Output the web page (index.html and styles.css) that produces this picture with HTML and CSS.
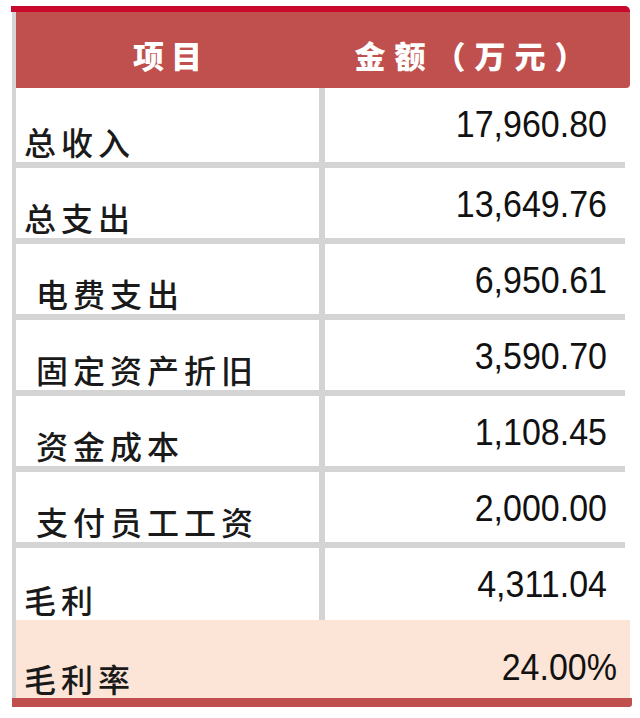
FILE: index.html
```html
<!DOCTYPE html>
<html lang="zh-CN">
<head>
<meta charset="utf-8">
<title>项目 金额</title>
<link rel="stylesheet" href="styles.css">
</head>
<body>
<div class="sheet">
  <div class="topline"></div>
  <div class="head">
    <div class="hcell">项目</div>
    <div class="hcell">金额（万元）</div>
  </div>
  <div class="grid">
    <div class="label">总收入</div><div class="amt"><span class="num">17,960.80</span></div>
    <div class="label">总支出</div><div class="amt"><span class="num">13,649.76</span></div>
    <div class="label sub">电费支出</div><div class="amt"><span class="num">6,950.61</span></div>
    <div class="label sub">固定资产折旧</div><div class="amt"><span class="num">3,590.70</span></div>
    <div class="label sub">资金成本</div><div class="amt"><span class="num">1,108.45</span></div>
    <div class="label sub">支付员工工资</div><div class="amt"><span class="num">2,000.00</span></div>
    <div class="label">毛利</div><div class="amt"><span class="num">4,311.04</span></div>
  </div>
  <div class="total">
    <div class="label">毛利率</div><div class="amt"><span class="num">24.00%</span></div>
  </div>
  <div class="bottomline"></div>
</div>
</body>
</html>
```
FILE: styles.css
```css
html, body {
  margin: 0;
  padding: 0;
  background: #ffffff;
}
.sheet {
  margin: 6px 0 0 12px;
  width: 620px;
}
.topline {
  margin-left: -1px;
  width: 619px;
  height: 6px;
  background: #c90a2c;
  border-top-right-radius: 5px;
}
.head {
  display: grid;
  grid-template-columns: 303px 305px;
  column-gap: 6px;
  width: 614px;
  height: 76px;
  border-left: 4px solid #d4d4d4;
  background: #c0504d;
  border-bottom-right-radius: 4px;
}
.hcell {
  display: flex;
  align-items: center;
  justify-content: center;
  padding-top: 8px;
  font-family: "Noto Sans CJK SC", sans-serif;
  font-weight: 900;
  font-size: 31px;
  line-height: 31px;
  color: #ffffff;
  letter-spacing: 7px;
  text-indent: 7px;
}
.hcell + .hcell {
  letter-spacing: 9px;
  text-indent: -6px;
}
.grid {
  display: grid;
  grid-template-columns: 303px 301px;
  grid-template-rows: 74px repeat(5, 70px) 72px;
  column-gap: 6px;
  row-gap: 6px;
  width: 604px;
  background: #d4d4d4;
  border-left: 4px solid #d4d4d4;
  border-right: 5px solid #d4d4d4;
}
.label {
  background: #ffffff;
  display: flex;
  align-items: flex-end;
  padding: 0 0 5px 8px;
  font-family: "Noto Sans CJK SC", serif;
  font-weight: 500;
  font-size: 32px;
  line-height: 32px;
  letter-spacing: 5px;
  color: #1a1a1a;
  white-space: nowrap;
}
.label.sub {
  padding-left: 20px;
}
.amt {
  background: #ffffff;
  display: flex;
  align-items: flex-start;
  justify-content: flex-end;
  padding: 17px 19px 0 0;
  font-family: "Liberation Sans", Arial, sans-serif;
  font-size: 34px;
  line-height: 34px;
  color: #111111;
}
.num {
  display: inline-block;
  transform: scaleY(1.1);
  transform-origin: 50% 0;
}
.total {
  display: grid;
  grid-template-columns: 303px 311px;
  column-gap: 0;
  width: 614px;
  height: 78px;
  border-left: 4px solid #d4d4d4;
  background: #fce4d6;
}
.total .label,
.total .amt {
  background: transparent;
}
.total .label {
  padding-bottom: 4px;
}
.total .amt {
  padding: 28px 13px 0 0;
}
.bottomline {
  width: 620px;
  height: 9px;
  background: #c0504d;
  border-bottom-right-radius: 3px;
}
```
